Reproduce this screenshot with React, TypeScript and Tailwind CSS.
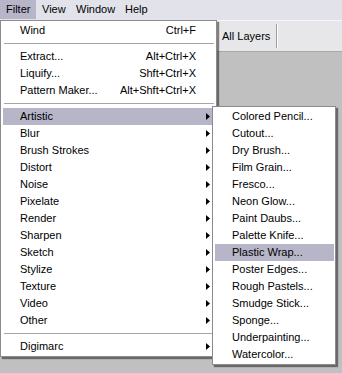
import React from "react";

type Item =
  | { kind: "item"; label: string; shortcut?: string; sub?: boolean; active?: boolean }
  | { kind: "sep" };

const mainItems: Item[] = [
  { kind: "item", label: "Wind", shortcut: "Ctrl+F" },
  { kind: "sep" },
  { kind: "item", label: "Extract...", shortcut: "Alt+Ctrl+X" },
  { kind: "item", label: "Liquify...", shortcut: "Shft+Ctrl+X" },
  { kind: "item", label: "Pattern Maker...", shortcut: "Alt+Shft+Ctrl+X" },
  { kind: "sep" },
  { kind: "item", label: "Artistic", sub: true, active: true },
  { kind: "item", label: "Blur", sub: true },
  { kind: "item", label: "Brush Strokes", sub: true },
  { kind: "item", label: "Distort", sub: true },
  { kind: "item", label: "Noise", sub: true },
  { kind: "item", label: "Pixelate", sub: true },
  { kind: "item", label: "Render", sub: true },
  { kind: "item", label: "Sharpen", sub: true },
  { kind: "item", label: "Sketch", sub: true },
  { kind: "item", label: "Stylize", sub: true },
  { kind: "item", label: "Texture", sub: true },
  { kind: "item", label: "Video", sub: true },
  { kind: "item", label: "Other", sub: true },
  { kind: "sep" },
  { kind: "item", label: "Digimarc", sub: true },
];

const artistic = [
  "Colored Pencil...",
  "Cutout...",
  "Dry Brush...",
  "Film Grain...",
  "Fresco...",
  "Neon Glow...",
  "Paint Daubs...",
  "Palette Knife...",
  "Plastic Wrap...",
  "Poster Edges...",
  "Rough Pastels...",
  "Smudge Stick...",
  "Sponge...",
  "Underpainting...",
  "Watercolor...",
];

function Arrow() {
  return (
    <svg width="4" height="7" viewBox="0 0 4 7" className="block">
      <path d="M0 0 L4 3.5 L0 7 Z" fill="#000" />
    </svg>
  );
}

export default function App() {
  return (
    <div
      className="relative w-[342px] h-[373px] overflow-hidden bg-[#c0c0c0] text-[11px] text-black"
      style={{ fontFamily: '"Liberation Sans", Arial, sans-serif' }}
    >
      {/* menu bar */}
      <div className="flex h-[20px] bg-[#e2e3ea] leading-[19px]">
        <div className="w-[36px] h-[19px] pl-[6px] bg-[#b6b6c8]">Filter</div>
        <div className="w-[34px] pl-[6px]">View</div>
        <div className="w-[49px] pl-[6px]">Window</div>
        <div className="w-[40px] pl-[6px]">Help</div>
      </div>

      {/* options bar (left part hidden under the open menu) */}
      <div className="flex items-center h-[32px] bg-[#e7e7e9] border-t border-[#f6f6f8] border-b border-b-[#a8a8a8] pl-[222px]">
        <span className="w-[54px] whitespace-nowrap">All Layers</span>
        <div className="flex h-[24px]">
          <div className="w-px bg-[#9c9c9c]" />
          <div className="w-px bg-white" />
        </div>
      </div>

      {/* Filter menu */}
      <div className="absolute left-0 top-[20px] w-[217px] bg-white border border-[#8c8c8c] pt-[1px] pb-[1px] pl-[2px] pr-[2px] shadow-[2px_2px_1px_rgba(0,0,0,0.45)]">
        {mainItems.map((it, i) =>
          it.kind === "sep" ? (
            <div key={i} className="h-[9px] flex items-center pl-[1px]">
              <div className="h-px w-full bg-[#a6a6a6]" />
            </div>
          ) : (
            <div
              key={i}
              className={`flex items-center h-[17px] leading-[17px] pl-[17px] ${it.active ? "bg-[#b6b6c8]" : ""}`}
            >
              <span className="flex-1 whitespace-nowrap">{it.label}</span>
              {it.shortcut ? <span className="whitespace-nowrap">{it.shortcut}</span> : null}
              <span className="w-[18px] flex justify-start pl-[10px]">{it.sub ? <Arrow /> : null}</span>
            </div>
          )
        )}
      </div>

      {/* Artistic submenu */}
      <div className="absolute left-[212px] top-[106px] w-[124px] bg-white border border-[#8c8c8c] py-[1px] pl-[2px] pr-[1px] shadow-[2px_2px_1px_rgba(0,0,0,0.45)]">
        {artistic.map((label) => (
          <div
            key={label}
            className={`h-[17px] leading-[17px] pl-[17px] whitespace-nowrap ${label === "Plastic Wrap..." ? "bg-[#b6b6c8]" : ""}`}
          >
            {label}
          </div>
        ))}
      </div>
    </div>
  );
}
